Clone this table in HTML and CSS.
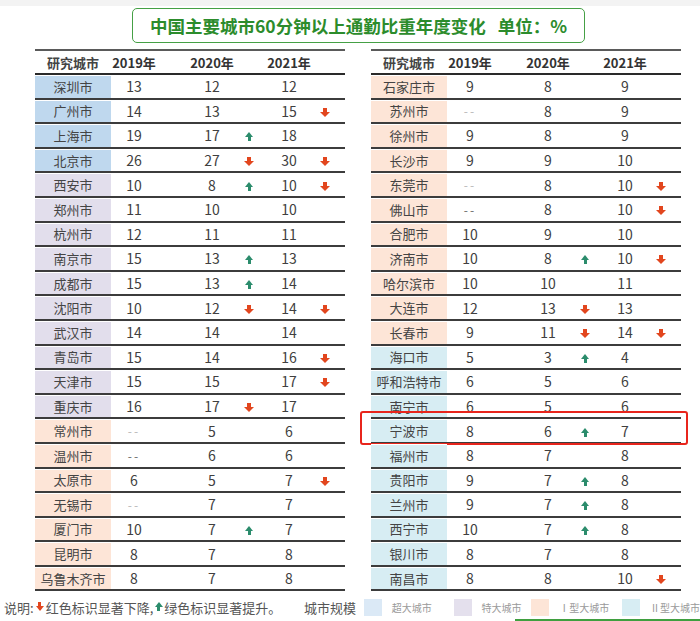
FILE: index.html
```html
<!DOCTYPE html>
<html lang="zh-CN">
<head>
<meta charset="utf-8">
<title>中国主要城市60分钟以上通勤比重年度变化</title>
<link rel="stylesheet" href="styles.css">
</head>
<body>
<div class="page">
  <div class="topbar"></div>
  <div class="title">中国主要城市60分钟以上通勤比重年度变化<span class="gap"></span>单位：%</div>
  <div class="tables">
    <div class="tbl">
      <div class="row head"><span class="city">研究城市</span><span class="v">2019年</span><span class="v v20">2020年</span><span></span><span class="v">2021年</span><span></span></div>
      <div class="row"><span class="city s1">深圳市</span><span class="v">13</span><span class="v v20">12</span><span class="a"></span><span class="v">12</span><span class="a"></span></div>
      <div class="row"><span class="city s1">广州市</span><span class="v">14</span><span class="v v20">13</span><span class="a"></span><span class="v">15</span><span class="a"><i class="arr dn"></i></span></div>
      <div class="row"><span class="city s1">上海市</span><span class="v">19</span><span class="v v20">17</span><span class="a"><i class="arr up"></i></span><span class="v">18</span><span class="a"></span></div>
      <div class="row"><span class="city s1">北京市</span><span class="v">26</span><span class="v v20">27</span><span class="a"><i class="arr dn"></i></span><span class="v">30</span><span class="a"><i class="arr dn"></i></span></div>
      <div class="row"><span class="city s2">西安市</span><span class="v">10</span><span class="v v20">8</span><span class="a"><i class="arr up"></i></span><span class="v">10</span><span class="a"><i class="arr dn"></i></span></div>
      <div class="row"><span class="city s2">郑州市</span><span class="v">11</span><span class="v v20">10</span><span class="a"></span><span class="v">10</span><span class="a"></span></div>
      <div class="row"><span class="city s2">杭州市</span><span class="v">12</span><span class="v v20">11</span><span class="a"></span><span class="v">11</span><span class="a"></span></div>
      <div class="row"><span class="city s2">南京市</span><span class="v">15</span><span class="v v20">13</span><span class="a"><i class="arr up"></i></span><span class="v">13</span><span class="a"></span></div>
      <div class="row"><span class="city s2">成都市</span><span class="v">15</span><span class="v v20">13</span><span class="a"><i class="arr up"></i></span><span class="v">14</span><span class="a"></span></div>
      <div class="row"><span class="city s2">沈阳市</span><span class="v">10</span><span class="v v20">12</span><span class="a"><i class="arr dn"></i></span><span class="v">14</span><span class="a"><i class="arr dn"></i></span></div>
      <div class="row"><span class="city s2">武汉市</span><span class="v">14</span><span class="v v20">14</span><span class="a"></span><span class="v">14</span><span class="a"></span></div>
      <div class="row"><span class="city s2">青岛市</span><span class="v">15</span><span class="v v20">14</span><span class="a"></span><span class="v">16</span><span class="a"><i class="arr dn"></i></span></div>
      <div class="row"><span class="city s2">天津市</span><span class="v">15</span><span class="v v20">15</span><span class="a"></span><span class="v">17</span><span class="a"><i class="arr dn"></i></span></div>
      <div class="row"><span class="city s2">重庆市</span><span class="v">16</span><span class="v v20">17</span><span class="a"><i class="arr dn"></i></span><span class="v">17</span><span class="a"></span></div>
      <div class="row"><span class="city s3">常州市</span><span class="v na">--</span><span class="v v20">5</span><span class="a"></span><span class="v">6</span><span class="a"></span></div>
      <div class="row"><span class="city s3">温州市</span><span class="v na dk">--</span><span class="v v20">6</span><span class="a"></span><span class="v">6</span><span class="a"></span></div>
      <div class="row"><span class="city s3">太原市</span><span class="v">6</span><span class="v v20">5</span><span class="a"></span><span class="v">7</span><span class="a"><i class="arr dn"></i></span></div>
      <div class="row"><span class="city s3">无锡市</span><span class="v na">--</span><span class="v v20">7</span><span class="a"></span><span class="v">7</span><span class="a"></span></div>
      <div class="row"><span class="city s3">厦门市</span><span class="v">10</span><span class="v v20">7</span><span class="a"><i class="arr up"></i></span><span class="v">7</span><span class="a"></span></div>
      <div class="row"><span class="city s3">昆明市</span><span class="v">8</span><span class="v v20">7</span><span class="a"></span><span class="v">8</span><span class="a"></span></div>
      <div class="row"><span class="city s3">乌鲁木齐市</span><span class="v">8</span><span class="v v20">7</span><span class="a"></span><span class="v">8</span><span class="a"></span></div>
    </div>
    <div class="tbl">
      <div class="row head"><span class="city">研究城市</span><span class="v">2019年</span><span class="v v20">2020年</span><span></span><span class="v">2021年</span><span></span></div>
      <div class="row"><span class="city s3">石家庄市</span><span class="v">9</span><span class="v v20">8</span><span class="a"></span><span class="v">9</span><span class="a"></span></div>
      <div class="row"><span class="city s3">苏州市</span><span class="v na">--</span><span class="v v20">8</span><span class="a"></span><span class="v">9</span><span class="a"></span></div>
      <div class="row"><span class="city s3">徐州市</span><span class="v">9</span><span class="v v20">8</span><span class="a"></span><span class="v">9</span><span class="a"></span></div>
      <div class="row"><span class="city s3">长沙市</span><span class="v">9</span><span class="v v20">9</span><span class="a"></span><span class="v">10</span><span class="a"></span></div>
      <div class="row"><span class="city s3">东莞市</span><span class="v na">--</span><span class="v v20">8</span><span class="a"></span><span class="v">10</span><span class="a"><i class="arr dn"></i></span></div>
      <div class="row"><span class="city s3">佛山市</span><span class="v na dk">--</span><span class="v v20">8</span><span class="a"></span><span class="v">10</span><span class="a"><i class="arr dn"></i></span></div>
      <div class="row"><span class="city s3">合肥市</span><span class="v">10</span><span class="v v20">9</span><span class="a"></span><span class="v">10</span><span class="a"></span></div>
      <div class="row"><span class="city s3">济南市</span><span class="v">10</span><span class="v v20">8</span><span class="a"><i class="arr up"></i></span><span class="v">10</span><span class="a"><i class="arr dn"></i></span></div>
      <div class="row"><span class="city s3">哈尔滨市</span><span class="v">10</span><span class="v v20">10</span><span class="a"></span><span class="v">11</span><span class="a"></span></div>
      <div class="row"><span class="city s3">大连市</span><span class="v">12</span><span class="v v20">13</span><span class="a"><i class="arr dn"></i></span><span class="v">13</span><span class="a"></span></div>
      <div class="row"><span class="city s3">长春市</span><span class="v">9</span><span class="v v20">11</span><span class="a"><i class="arr dn"></i></span><span class="v">14</span><span class="a"><i class="arr dn"></i></span></div>
      <div class="row"><span class="city s4">海口市</span><span class="v">5</span><span class="v v20">3</span><span class="a"><i class="arr up"></i></span><span class="v">4</span><span class="a"></span></div>
      <div class="row"><span class="city s4">呼和浩特市</span><span class="v">6</span><span class="v v20">5</span><span class="a"></span><span class="v">6</span><span class="a"></span></div>
      <div class="row"><span class="city s4">南宁市</span><span class="v">6</span><span class="v v20">5</span><span class="a"></span><span class="v">6</span><span class="a"></span></div>
      <div class="row mark"><span class="city s4">宁波市</span><span class="v">8</span><span class="v v20">6</span><span class="a"><i class="arr up"></i></span><span class="v">7</span><span class="a"></span><span class="hl"></span></div>
      <div class="row"><span class="city s4">福州市</span><span class="v">8</span><span class="v v20">7</span><span class="a"></span><span class="v">8</span><span class="a"></span></div>
      <div class="row"><span class="city s4">贵阳市</span><span class="v">9</span><span class="v v20">7</span><span class="a"><i class="arr up"></i></span><span class="v">8</span><span class="a"></span></div>
      <div class="row"><span class="city s4">兰州市</span><span class="v">9</span><span class="v v20">7</span><span class="a"><i class="arr up"></i></span><span class="v">8</span><span class="a"></span></div>
      <div class="row"><span class="city s4">西宁市</span><span class="v">10</span><span class="v v20">7</span><span class="a"><i class="arr up"></i></span><span class="v">8</span><span class="a"></span></div>
      <div class="row"><span class="city s4">银川市</span><span class="v">8</span><span class="v v20">7</span><span class="a"></span><span class="v">8</span><span class="a"></span></div>
      <div class="row"><span class="city s4">南昌市</span><span class="v">8</span><span class="v v20">8</span><span class="a"></span><span class="v">10</span><span class="a"><i class="arr dn"></i></span></div>
    </div>
  </div>
  <div class="legend">
    <div class="note">说明:<i class="arr dn sm"></i>红色标识显著下降,<i class="arr up sm"></i>绿色标识显著提升。</div>
    <div class="scale">城市规模</div>
    <div class="item w1"><span class="sw l1"></span><span class="lbl">超大城市</span></div>
    <div class="item w2"><span class="sw l2"></span><span class="lbl">特大城市</span></div>
    <div class="item w3"><span class="sw l3"></span><span class="lbl">Ⅰ型大城市</span></div>
    <div class="item"><span class="sw l4"></span><span class="lbl">Ⅱ型大城市</span></div>
  </div>
  <div class="nextline"></div>
</div>
</body>
</html>
```

FILE: styles.css
```css
html, body {
  margin: 0;
  padding: 0;
  background: #ffffff;
  overflow: hidden;
}
.page {
  width: 700px;
  font-family: "Noto Sans CJK SC", "Noto Sans", sans-serif;
  color: #404040;
}
.topbar {
  height: 6px;
  background: #f3f3f3;
}
.title {
  margin: 2px 0 0 132px;
  width: 453px;
  height: 35px;
  box-sizing: border-box;
  border: 1.5px solid #45a045;
  border-radius: 5px;
  display: flex;
  align-items: center;
  justify-content: center;
  color: #2c8c2c;
  font-weight: 700;
  font-size: 17.5px;
  white-space: nowrap;
}
.title .gap {
  display: inline-block;
  width: 12px;
}
.tables {
  display: flex;
  gap: 26px;
  padding-left: 35px;
  margin-top: 6px;
}
.tbl {
  width: 310px;
  border-top: 2px solid #5a5a5a;
}
.row {
  display: grid;
  grid-template-columns: 76px 46px 80px 24px 56px 16px 1fr;
  height: 22.6px;
  border-bottom: 2px solid #3c3c3c;
  align-items: stretch;
  position: relative;
}
.row.head {
  height: 22px;
  font-weight: 700;
  font-size: 13px;
  color: #333;
  border-bottom-color: #2a2a2a;
}
.row > span {
  display: flex;
  align-items: center;
  justify-content: center;
  white-space: nowrap;
}
.city {
  font-size: 13px;
  color: #444;
  box-shadow: inset 0 1px 0 #ffffff;
}
.head .city { box-shadow: none; }
.s1 { background: #bfd8ee; }
.s2 { background: #e2deec; }
.s3 { background: #fde5d7; }
.s4 { background: #d7edf3; }
.v {
  font-size: 14px;
  color: #404040;
}
.head .v { font-size: 13px; color: #333; }
.v20 {
  padding-left: 30px;
}
.na {
  color: #b8b8b8;
  letter-spacing: 2px;
  font-size: 12px;
}
.na.dk { color: #6a6a6a; }
.a {
  padding-top: 3px;
}
.arr {
  display: inline-flex;
  flex-direction: column;
  align-items: center;
  width: 10px;
}
.arr::before, .arr::after {
  content: "";
  display: block;
}
.arr.dn::before {
  width: 4px;
  height: 4px;
  background: #e2461e;
}
.arr.dn::after {
  width: 0;
  height: 0;
  border-left: 5px solid transparent;
  border-right: 5px solid transparent;
  border-top: 5px solid #e2461e;
}
.arr.up {
  width: 9px;
}
.arr.up::before {
  width: 0;
  height: 0;
  border-left: 4.5px solid transparent;
  border-right: 4.5px solid transparent;
  border-bottom: 5px solid #2b8c6c;
}
.arr.up::after {
  width: 3px;
  height: 4px;
  background: #2b8c6c;
}
.arr.sm {
  margin: 0 1px;
  vertical-align: middle;
  position: relative;
  top: -1px;
}
.arr.sm.dn::before { width: 3px; }
.arr.sm.dn::after {
  border-left-width: 4px;
  border-right-width: 4px;
}
.hl {
  position: absolute;
  left: -11px;
  right: -7px;
  top: -8px;
  bottom: -3px;
  border: 2px solid #e8251c;
  border-radius: 3px;
  pointer-events: none;
}
.legend {
  display: flex;
  align-items: center;
  height: 18px;
  margin-top: 7px;
  padding-left: 4px;
  font-size: 13px;
  color: #555;
  white-space: nowrap;
}
.note {
  width: 301px;
  display: flex;
  align-items: center;
}
.scale {
  width: 60px;
}
.item {
  display: flex;
  align-items: center;
  gap: 10px;
}
.w1 { width: 90px; }
.w2 { width: 78px; }
.w3 { width: 91px; }
.sw {
  width: 18px;
  height: 17px;
}
.l1 { background: #dbe9f6; }
.l2 { background: #e4e0ed; }
.l3 { background: #fde5d7; }
.l4 { background: #d7edf3; }
.lbl {
  font-size: 10px;
  color: #9a9a9a;
}
.nextline {
  margin: 3px 0 0 515px;
  height: 2px;
  background: #3f9f3f;
}
```
